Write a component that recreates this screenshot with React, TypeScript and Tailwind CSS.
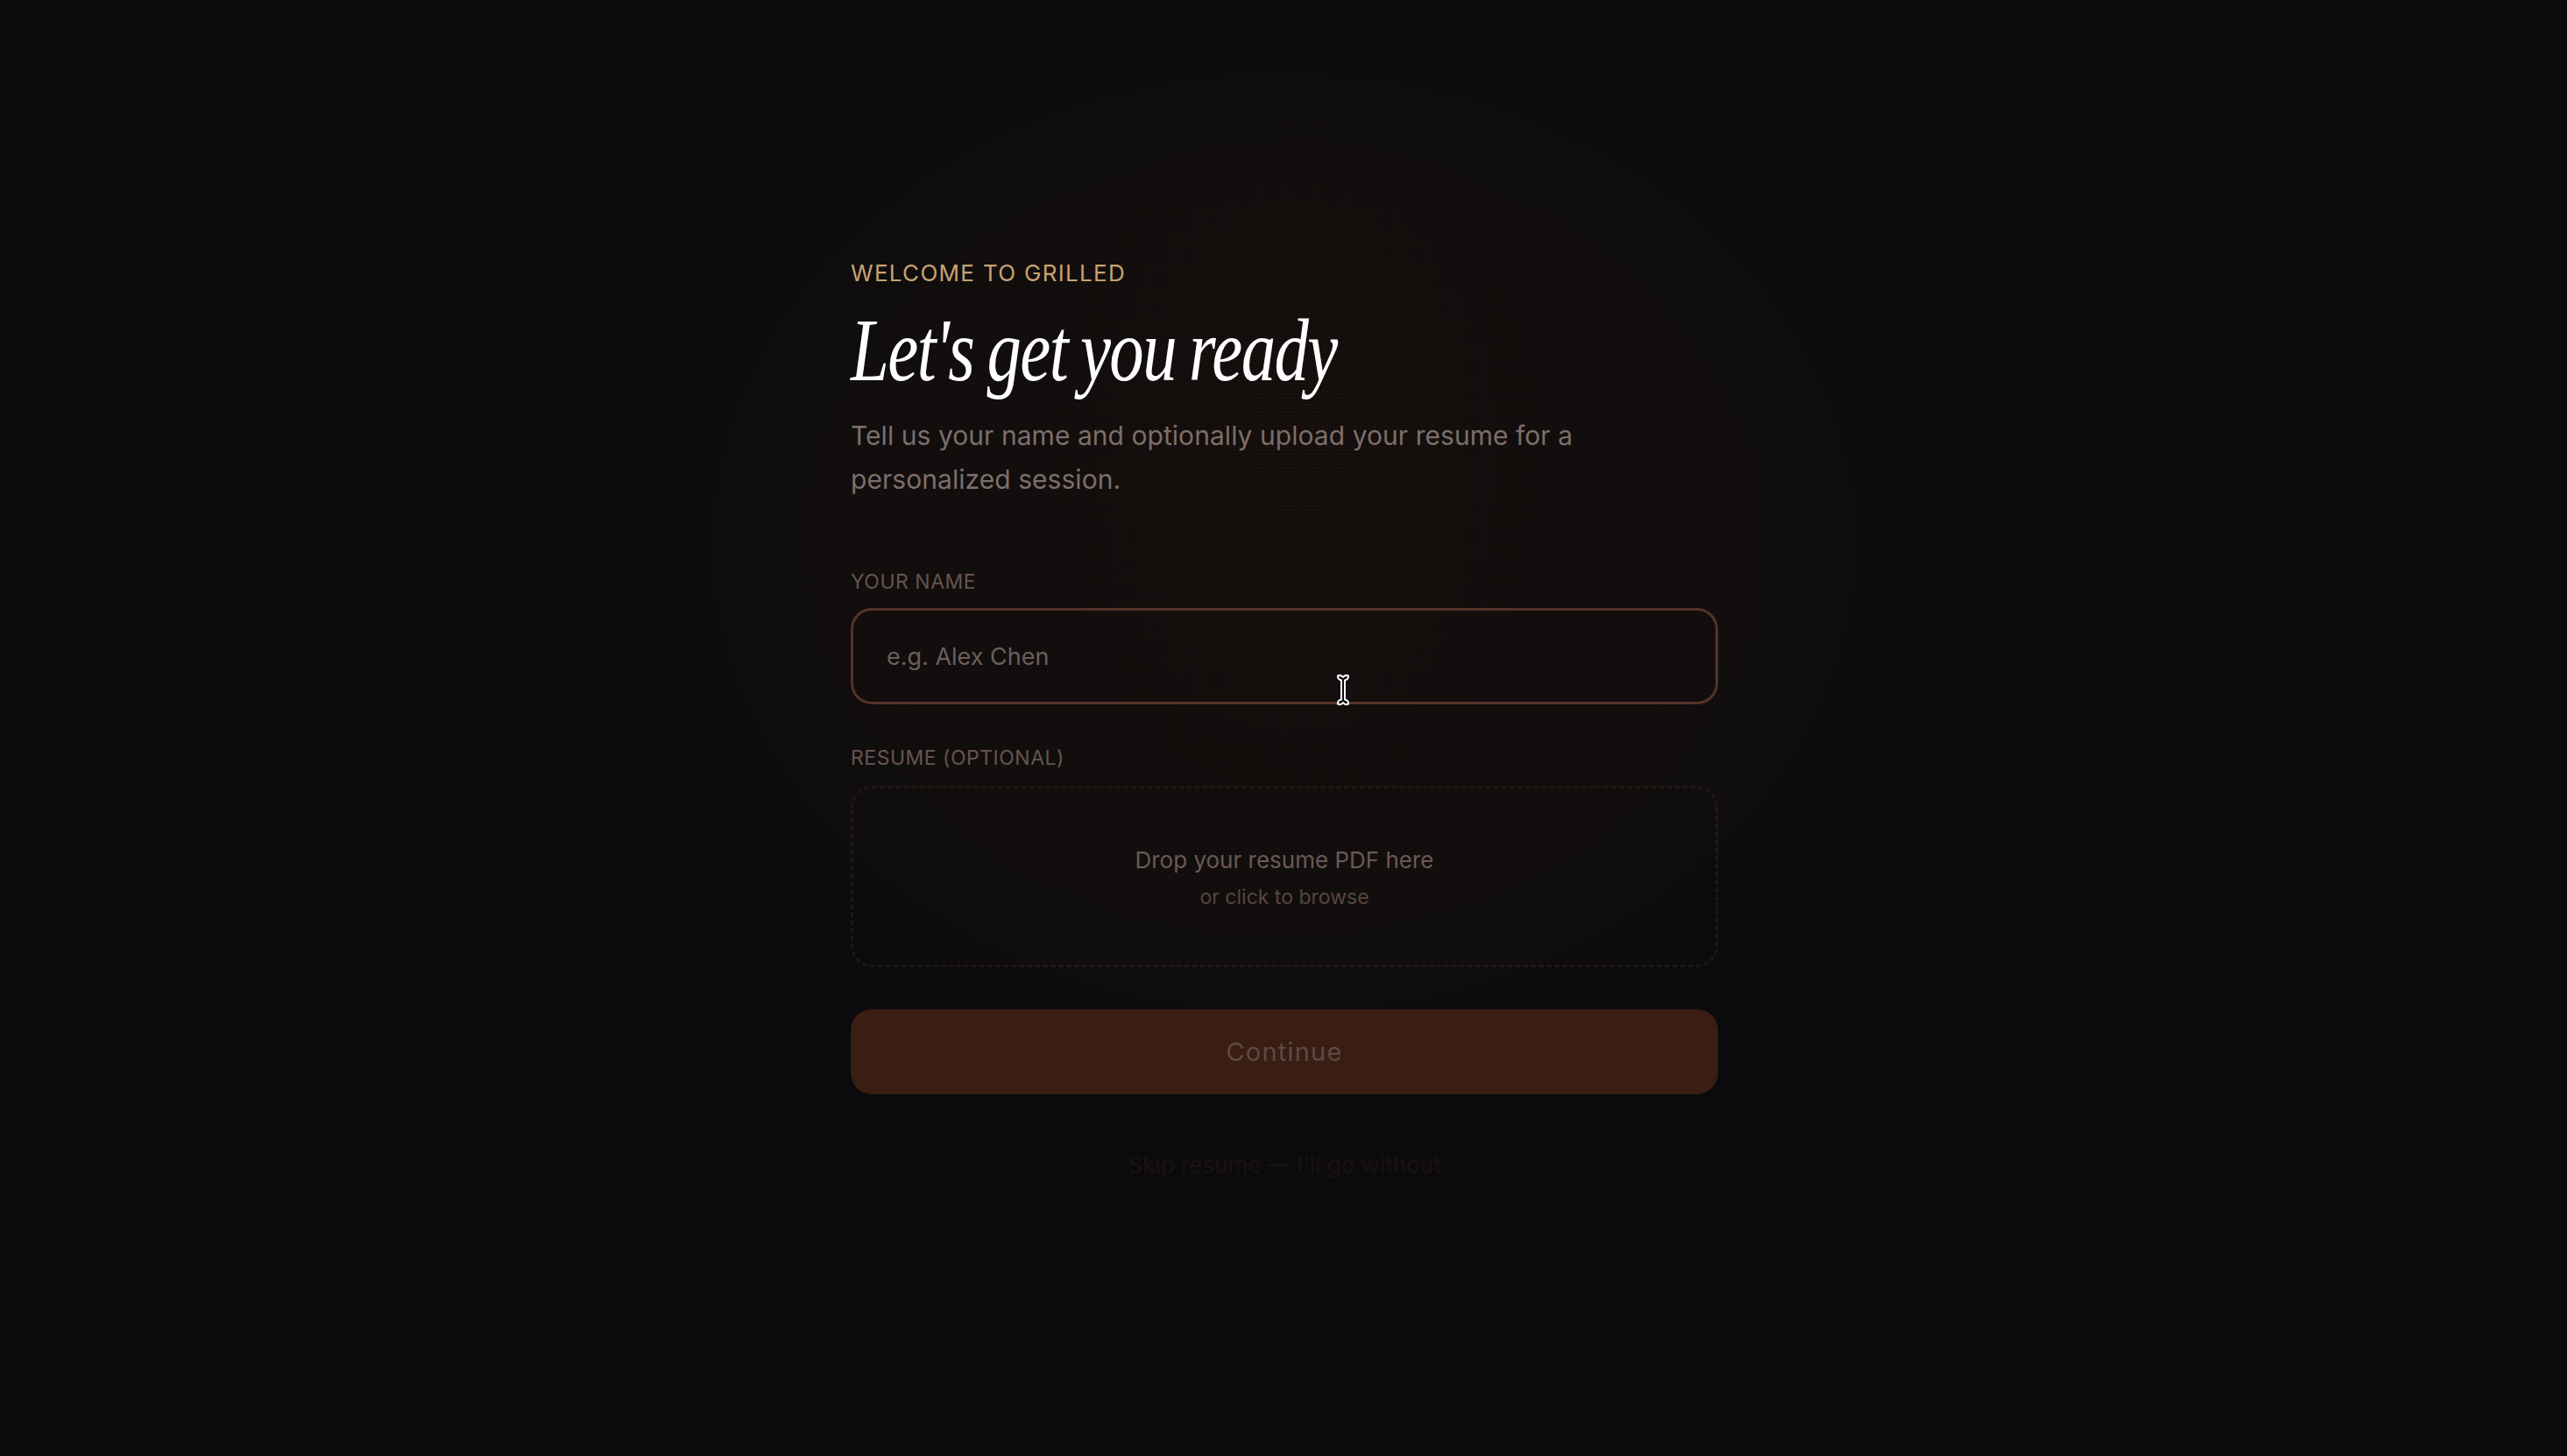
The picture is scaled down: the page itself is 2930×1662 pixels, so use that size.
import { useState } from "react";

const sans = "font-['Inter','Noto_Sans',sans-serif]";

function IBeam() {
  return (
    <svg className="pointer-events-none absolute left-[1525px] top-[769px]" width="16" height="38" viewBox="0 0 16 38" fill="none">
      <path
        d="M2 2.500c2 -1 4.500 -0.500 6 1.500c1.500 -2 4 -2.500 6 -1.500c0.500 2.500 -1.500 4.500 -4 5v22c2.500 0.500 4.500 2.500 4 5c-2 1 -4.500 0.500 -6 -1.500c-1.500 2 -4 2.500 -6 1.500c-0.500 -2.500 1.500 -4.500 4 -5v-22c-2.500 -0.500 -4.500 -2.500 -4 -5z"
        fill="#0d0b0b"
        stroke="#ffffff"
        strokeWidth="2"
        strokeLinejoin="round"
      />
    </svg>
  );
}

export default function App() {
  const [name, setName] = useState("");

  return (
    <div className={`relative h-[1662px] w-full overflow-hidden bg-[#0b0b0e] ${sans}`}>
      <div className="absolute inset-0 bg-[radial-gradient(ellipse_780px_640px_at_1465px_620px,#120e0d_0%,#120e0d_62%,#0b0b0e_100%)]" />
      <div className="absolute inset-0 bg-[radial-gradient(rgba(140,50,20,0.26)_1px,transparent_1.2px)] bg-[length:4px_4px] [mask-image:radial-gradient(ellipse_300px_420px_at_1480px_520px,rgba(0,0,0,0.5)_0%,rgba(0,0,0,0)_100%)]" />

      <div className="relative mx-auto flex w-[990px] translate-x-[1px] flex-col pt-[296px]">
        <div className="text-[26px] leading-[32px] tracking-[1.3px] text-[#c8a271]">WELCOME TO GRILLED</div>
        <h1 className="mt-[17px] h-[110px] origin-left scale-x-[0.78] whitespace-nowrap font-['Liberation_Serif',serif] text-[101px] leading-[110px] tracking-[-2px] [word-spacing:-4px] text-white italic">
          Let's get you ready
        </h1>
        <p className="mt-[17px] text-[30px] leading-[50px] tracking-[0.05px] text-[#7d6e6a]">
          Tell us your name and optionally upload your resume for a
          <br />
          personalized session.
        </p>

        <label className="mt-[77px] text-[23px] leading-[30px] tracking-[0.5px] text-[#665450]">YOUR NAME</label>
        <input
          value={name}
          onChange={e => setName(e.target.value)}
          placeholder="e.g. Alex Chen"
          className="mt-[15px] h-[110px] w-full rounded-[24px] border-[3px] border-[#55332a] bg-transparent px-[38px] text-[27px] outline-none placeholder:text-[#6b5f5c]"
        />

        <label className="mt-[46px] text-[23px] leading-[30px] tracking-[0.5px] text-[#665450]">RESUME (OPTIONAL)</label>
        <div className="mt-[17px] flex h-[207px] w-full flex-col items-center rounded-[24px] border-[3px] border-dashed border-[#201614] pt-[64px]">
          <div className="text-[26px] leading-[36px] text-[#6a5955]">Drop your resume PDF here</div>
          <div className="mt-[9px] text-[23px] leading-[30px] text-[#57463f]">or click to browse</div>
        </div>

        <button className="mt-[48px] h-[97px] w-full rounded-[24px] bg-[#3a1d13] text-[29px] tracking-[1.2px] text-[#5e4a44]">
          Continue
        </button>

        <button className="mt-[63px] self-center text-[26px] leading-[36px] text-[#1b110e]">Skip resume — I'll go without</button>
      </div>

      <IBeam />
    </div>
  );
}
